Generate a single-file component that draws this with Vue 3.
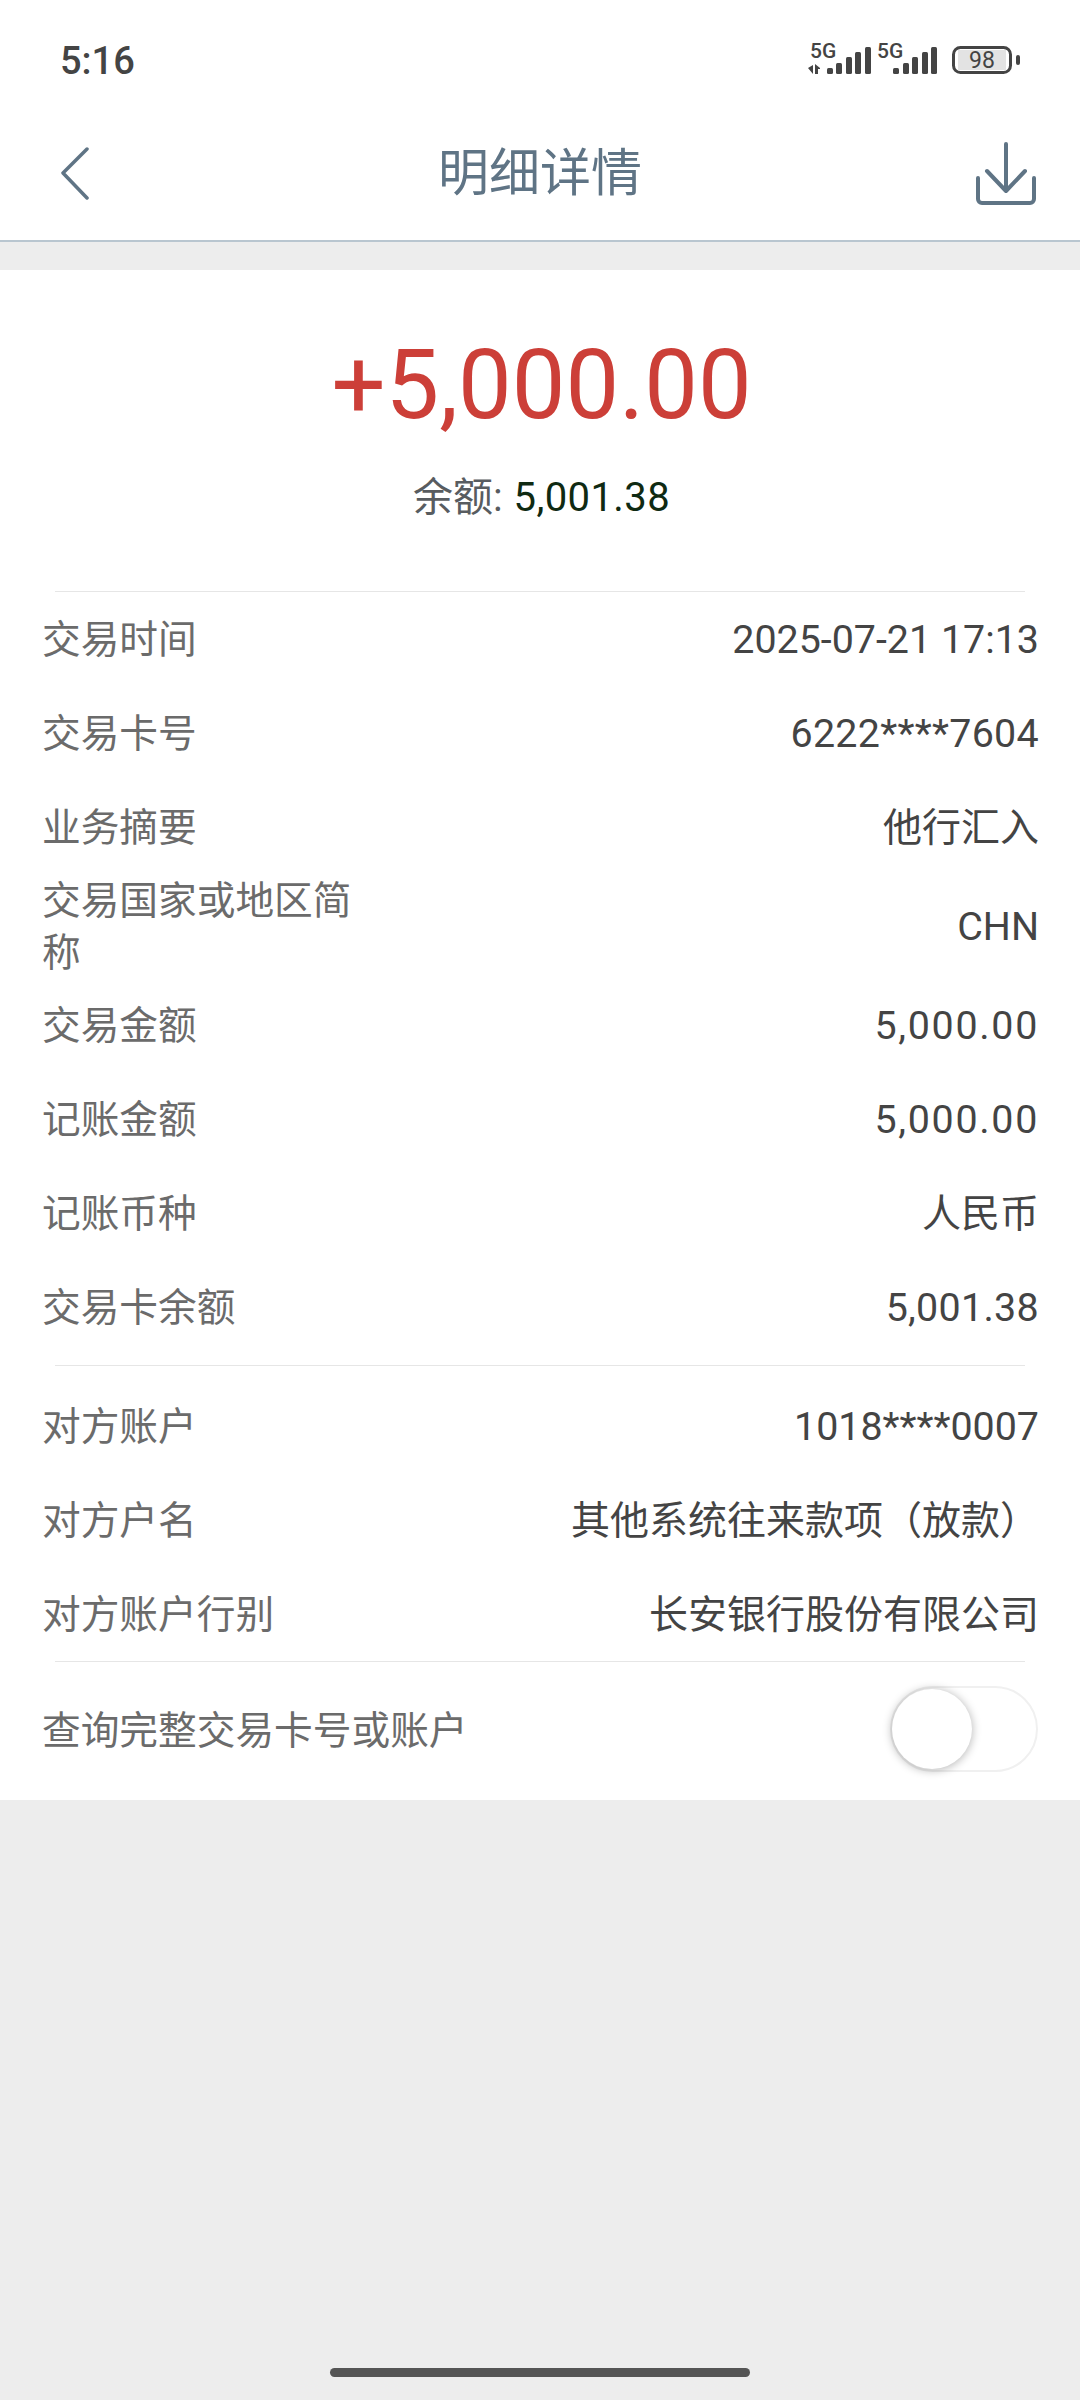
<script setup>
const firstRows = [
  { label: "交易时间", value: "2025-07-21 17:13" },
  { label: "交易卡号", value: "6222****7604", kind: "num" },
  { label: "业务摘要", value: "他行汇入", kind: "cjk" },
  { label: "交易国家或地区简称", value: "CHN", tall: true },
  { label: "交易金额", value: "5,000.00", kind: "money" },
  { label: "记账金额", value: "5,000.00", kind: "money" },
  { label: "记账币种", value: "人民币", kind: "cjk" },
  { label: "交易卡余额", value: "5,001.38", kind: "num" },
];

const secondRows = [
  { label: "对方账户", value: "1018****0007" },
  { label: "对方户名", value: "其他系统往来款项（放款）", kind: "cjk" },
  { label: "对方账户行别", value: "长安银行股份有限公司", kind: "cjk" },
];
</script>

<template>
  <div class="page">
    <div class="status">
      <span class="time">5:16</span>
      <svg class="status-icons" width="220" height="40" viewBox="0 0 220 40">
        <g fill="#444">
          <text x="5" y="18" class="net">5G</text>
          <path d="M3 28l5-3v9zM10 24l5 4v1h-2v5h-3z" />
          <rect x="22" y="28" width="6" height="6" rx="1.5" />
          <rect x="31" y="23" width="6" height="11" rx="1.5" />
          <rect x="41" y="17" width="6" height="17" rx="1.5" />
          <rect x="50" y="12" width="6" height="22" rx="1.5" />
          <rect x="60" y="7" width="6" height="27" rx="1.5" />
          <text x="72" y="18" class="net">5G</text>
          <rect x="88" y="28" width="6" height="6" rx="1.5" />
          <rect x="98" y="23" width="6" height="11" rx="1.5" />
          <rect x="107" y="17" width="6" height="17" rx="1.5" />
          <rect x="117" y="12" width="6" height="22" rx="1.5" />
          <rect x="126" y="7" width="6" height="27" rx="1.5" />
          <rect x="211" y="15" width="4" height="10" rx="2" />
        </g>
        <rect x="148.5" y="7.5" width="57" height="25" rx="7" fill="#fff" stroke="#444" stroke-width="3" />
        <rect x="153" y="10" width="48" height="20" fill="#e3e3e3" />
        <text x="177" y="28" class="level">98</text>
      </svg>
    </div>

    <header class="nav">
      <svg class="nav-back" width="30" height="54" viewBox="0 0 30 54" fill="none" stroke="#5f7485" stroke-width="3.5" stroke-linecap="round" stroke-linejoin="round">
        <path d="M27 2 3 26l24 25" />
      </svg>
      <h1 class="title">明细详情</h1>
      <svg class="nav-save" width="62" height="64" viewBox="0 0 62 64" fill="none" stroke="#5f7485" stroke-width="4" stroke-linecap="round" stroke-linejoin="round">
        <path d="M31 2v46M12 29l19 20 19-20" />
        <path d="M3 36v21a4 4 0 0 0 4 4h48a4 4 0 0 0 4-4V36" />
      </svg>
    </header>

    <main class="card">
      <section class="hero">
        <div class="amount">+5,000.00</div>
        <div class="balance">余额: <span class="balance-num">5,001.38</span></div>
      </section>

      <section class="group first">
        <div v-for="row in firstRows" :key="row.label" class="row" :class="{ tall: row.tall }">
          <span class="label">{{ row.label }}</span>
          <span class="value" :class="row.kind">{{ row.value }}</span>
        </div>
      </section>

      <section class="group second">
        <div v-for="row in secondRows" :key="row.label" class="row">
          <span class="label wide">{{ row.label }}</span>
          <span class="value" :class="row.kind">{{ row.value }}</span>
        </div>
      </section>

      <section class="query">
        <span class="label wide">查询完整交易卡号或账户</span>
        <div class="switch"><div class="knob"></div></div>
      </section>
    </main>

    <div class="home-bar"></div>
  </div>
</template>

<style scoped>
.page {
  width: 1080px;
  height: 2400px;
  background: #ededed;
  display: flex;
  flex-direction: column;
  position: relative;
  font-family: Roboto, "Noto Sans CJK SC", sans-serif;
}

.status {
  height: 104px;
  background: #fff;
  display: flex;
  align-items: flex-start;
  justify-content: space-between;
  padding: 37px 55px 0 60px;
  box-sizing: border-box;
}

.time {
  font-size: 38px;
  line-height: 48px;
  font-weight: 500;
  color: #444;
}

.status-icons {
  margin: 3px 0 0;
}

.net {
  font-size: 21px;
  font-weight: 500;
  font-family: Roboto, sans-serif;
}

.level {
  font-size: 23px;
  font-family: Roboto, sans-serif;
  text-anchor: middle;
  fill: #444;
}

.nav {
  height: 138px;
  background: #fff;
  border-bottom: 2px solid #b9c6d0;
  display: grid;
  grid-template-columns: 1fr auto 1fr;
  align-items: center;
  padding: 4px 43px 0;
  box-sizing: border-box;
}

.nav-back {
  margin-left: 17px;
}

.nav-save {
  justify-self: end;
}

.title {
  margin: 0;
  font-size: 51px;
  line-height: 60px;
  font-weight: 400;
  color: #5f7485;
}

.card {
  margin-top: 28px;
  background: #fff;
  height: 1530px;
  display: flex;
  flex-direction: column;
}

.hero {
  height: 321px;
  box-sizing: border-box;
  padding: 62px 0 0 3px;
  text-align: center;
}

.amount {
  font-size: 95.5px;
  line-height: 106px;
  color: #cc3f38;
}

.balance {
  margin-top: 35px;
  font-size: 40px;
  line-height: 50px;
  color: #585c60;
}

.balance-num {
  color: #0f2a12;
  margin-left: 1px;
  letter-spacing: 0.4px;
}

.group {
  margin: 0 55px;
  padding: 0;
}

.first {
  border-top: 1px solid #e6e6e6;
  border-bottom: 1px solid #e6e6e6;
  padding-bottom: 11px;
}

.second {
  padding-top: 13px;
  border-bottom: 1px solid #e6e6e6;
}

.row {
  height: 94px;
  margin: 0 -14px 0 -13px;
  display: flex;
  align-items: center;
  justify-content: space-between;
  padding-top: 1px;
  box-sizing: border-box;
}

.row.tall {
  height: 104px;
}

.label {
  width: 320px;
  font-size: 38.7px;
  line-height: 52px;
  color: #6b6b6b;
}

.label.wide {
  width: auto;
  flex-shrink: 0;
}

.value {
  font-size: 39.4px;
  line-height: 52px;
  color: #444;
  text-align: right;
}

.value.cjk {
  font-size: 39px;
}

.value.money {
  letter-spacing: 1.7px;
}

.value.num {
  letter-spacing: 0.3px;
}

.query {
  margin: 0 42px 0 42px;
  flex: 1;
  display: flex;
  align-items: center;
  justify-content: space-between;
}

.switch {
  width: 148px;
  height: 86px;
  margin-top: -5px;
  box-sizing: border-box;
  border: 2px solid #f0f0f0;
  border-radius: 43px;
  position: relative;
}

.knob {
  position: absolute;
  left: 0;
  top: 1px;
  width: 80px;
  height: 80px;
  border-radius: 50%;
  background: #fff;
  box-shadow: 0 1px 8px 1px rgba(0, 0, 0, 0.25);
}

.home-bar {
  position: absolute;
  left: 330px;
  bottom: 23px;
  width: 420px;
  height: 9px;
  border-radius: 5px;
  background: #555;
}
</style>
